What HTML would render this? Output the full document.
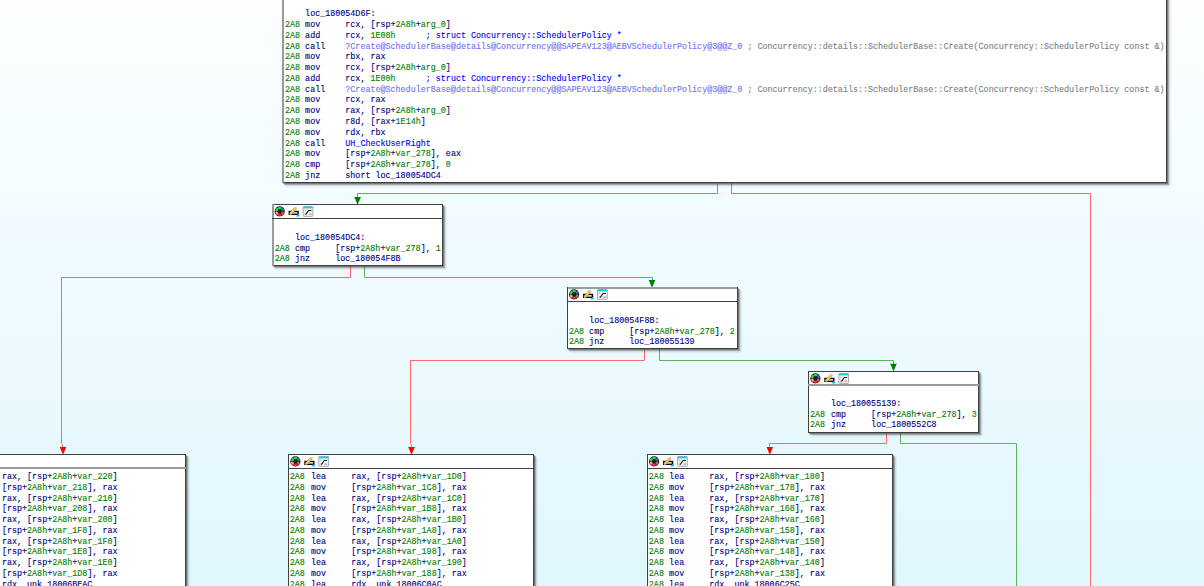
<!DOCTYPE html>
<html><head><meta charset="utf-8"><style>
html,body{margin:0;padding:0}
body{width:1204px;height:586px;overflow:hidden;position:relative;background:linear-gradient(to bottom,#fcfeff 0px,#e0f7fe 586px)}
.bd{position:absolute}
.node{position:absolute;background:#fff;box-shadow:1px 1px 0 rgba(0,0,0,.28),2px 2px 1px rgba(0,0,0,.22),3px 3px 2px rgba(0,0,0,.14)}
.sep{position:absolute;height:1px;background:#3c3c3c}
.icons{position:absolute}
.ln{position:absolute;white-space:pre;font-family:"Liberation Mono",monospace;font-size:8.39px;line-height:10.78px;color:#000080;-webkit-text-stroke:0.12px currentColor}
.g{color:#008000}.b{color:#0000ff}.i{color:#7272f4}.c{color:#808080}
svg.edges{position:absolute;left:0;top:0}
</style></head><body>
<svg class="edges" width="1204" height="586"><path d="M717.5 183.5 L717.5 193.5 L357.5 193.5 L357.5 200.5" stroke="#5eb262" stroke-width="1" fill="none" stroke-linejoin="round"/><path d="M354.30 197.00 L360.90 197.00 L357.60 204.80 Z" fill="#008000"/><path d="M731.5 183.5 L731.5 193.5 L1090.5 193.5 L1090.5 600.5" stroke="#ff6868" stroke-width="1" fill="none" stroke-linejoin="round"/><path d="M350.5 266.5 L350.5 277.5 L61.5 277.5 L61.5 443.5 L62.5 444.5 L62.5 448.5" stroke="#ff6868" stroke-width="1" fill="none" stroke-linejoin="round"/><path d="M59.70 447.00 L66.30 447.00 L63.00 454.80 Z" fill="#ff0000"/><path d="M364.5 266.5 L364.5 277.5 L652.5 277.5 L652.5 283.5" stroke="#5eb262" stroke-width="1" fill="none" stroke-linejoin="round"/><path d="M648.70 280.00 L655.30 280.00 L652.00 287.80 Z" fill="#008000"/><path d="M644.5 349.5 L644.5 360.5 L410.5 360.5 L410.5 443.5 L411.5 444.5 L411.5 448.5" stroke="#ff6868" stroke-width="1" fill="none" stroke-linejoin="round"/><path d="M408.20 447.00 L414.80 447.00 L411.50 454.80 Z" fill="#ff0000"/><path d="M659.5 349.5 L659.5 360.5 L893.5 360.5 L893.5 366.5" stroke="#5eb262" stroke-width="1" fill="none" stroke-linejoin="round"/><path d="M890.20 363.80 L896.80 363.80 L893.50 371.60 Z" fill="#008000"/><path d="M886.5 433.5 L886.5 443.5 L769.5 443.5 L769.5 449.5" stroke="#ff6868" stroke-width="1" fill="none" stroke-linejoin="round"/><path d="M766.50 447.00 L773.10 447.00 L769.80 454.80 Z" fill="#ff0000"/><path d="M900.5 433.5 L900.5 443.5 L1016.5 443.5 L1016.5 600.5" stroke="#5eb262" stroke-width="1" fill="none" stroke-linejoin="round"/></svg>
<div class="node" style="left:282px;top:-40px;width:885px;height:223px"></div>
<div class="bd" style="left:282px;top:-40px;width:885px;height:1px;background:#404040"></div>
<div class="bd" style="left:282px;top:182px;width:885px;height:1px;background:#404040"></div>
<div class="bd" style="left:282px;top:-40px;width:2px;height:223px;background:#9a9a9a"></div>
<div class="bd" style="left:1166px;top:-40px;width:1px;height:223px;background:#404040"></div>
<div class="bd" style="left:282px;top:-6px;width:885px;height:1px;background:#404040"></div>
<div class="ln" style="left:285.00px;top:9.22px">    loc_180054D6F:</div>
<div class="ln g" style="left:284.90px;top:20.00px">2A8</div>
<div class="ln" style="left:285.00px;top:20.00px">    mov     rcx, [rsp+<span class="g">2A8h</span>+<span class="g">arg_0</span>]</div>
<div class="ln g" style="left:284.90px;top:30.78px">2A8</div>
<div class="ln" style="left:285.00px;top:30.78px">    add     rcx, <span class="g">1E08h</span>      <span class="b">; struct Concurrency::SchedulerPolicy *</span></div>
<div class="ln g" style="left:284.90px;top:41.56px">2A8</div>
<div class="ln" style="left:285.00px;top:41.56px">    call    <span class="i">?Create@SchedulerBase@details@Concurrency@@SAPEAV123@AEBVSchedulerPolicy@3@@Z_0</span> <span class="c">; Concurrency::details::SchedulerBase::Create(Concurrency::SchedulerPolicy const &amp;)</span></div>
<div class="ln g" style="left:284.90px;top:52.34px">2A8</div>
<div class="ln" style="left:285.00px;top:52.34px">    mov     rbx, rax</div>
<div class="ln g" style="left:284.90px;top:63.12px">2A8</div>
<div class="ln" style="left:285.00px;top:63.12px">    mov     rcx, [rsp+<span class="g">2A8h</span>+<span class="g">arg_0</span>]</div>
<div class="ln g" style="left:284.90px;top:73.90px">2A8</div>
<div class="ln" style="left:285.00px;top:73.90px">    add     rcx, <span class="g">1E00h</span>      <span class="b">; struct Concurrency::SchedulerPolicy *</span></div>
<div class="ln g" style="left:284.90px;top:84.68px">2A8</div>
<div class="ln" style="left:285.00px;top:84.68px">    call    <span class="i">?Create@SchedulerBase@details@Concurrency@@SAPEAV123@AEBVSchedulerPolicy@3@@Z_0</span> <span class="c">; Concurrency::details::SchedulerBase::Create(Concurrency::SchedulerPolicy const &amp;)</span></div>
<div class="ln g" style="left:284.90px;top:95.46px">2A8</div>
<div class="ln" style="left:285.00px;top:95.46px">    mov     rcx, rax</div>
<div class="ln g" style="left:284.90px;top:106.24px">2A8</div>
<div class="ln" style="left:285.00px;top:106.24px">    mov     rax, [rsp+<span class="g">2A8h</span>+<span class="g">arg_0</span>]</div>
<div class="ln g" style="left:284.90px;top:117.02px">2A8</div>
<div class="ln" style="left:285.00px;top:117.02px">    mov     r8d, [rax+<span class="g">1E14h</span>]</div>
<div class="ln g" style="left:284.90px;top:127.80px">2A8</div>
<div class="ln" style="left:285.00px;top:127.80px">    mov     rdx, rbx</div>
<div class="ln g" style="left:284.90px;top:138.58px">2A8</div>
<div class="ln" style="left:285.00px;top:138.58px">    call    <span class="b">UH_CheckUserRight</span></div>
<div class="ln g" style="left:284.90px;top:149.36px">2A8</div>
<div class="ln" style="left:285.00px;top:149.36px">    mov     [rsp+<span class="g">2A8h</span>+<span class="g">var_278</span>], eax</div>
<div class="ln g" style="left:284.90px;top:160.14px">2A8</div>
<div class="ln" style="left:285.00px;top:160.14px">    cmp     [rsp+<span class="g">2A8h</span>+<span class="g">var_278</span>], <span class="g">0</span></div>
<div class="ln g" style="left:284.90px;top:170.92px">2A8</div>
<div class="ln" style="left:285.00px;top:170.92px">    jnz     short loc_180054DC4</div>
<div class="node" style="left:272px;top:204px;width:171px;height:62px"></div>
<div class="bd" style="left:272px;top:204px;width:171px;height:1px;background:#404040"></div>
<div class="bd" style="left:272px;top:265px;width:171px;height:1px;background:#404040"></div>
<div class="bd" style="left:272px;top:204px;width:2px;height:62px;background:#9a9a9a"></div>
<div class="bd" style="left:442px;top:204px;width:1px;height:62px;background:#404040"></div>
<div class="bd" style="left:272px;top:218px;width:171px;height:1px;background:#404040"></div>
<svg class="icons" style="left:272px;top:204px" width="45" height="14" viewBox="0 0 45 14"><g transform="translate(0.60 0)">
<circle cx="7.1" cy="7.4" r="5.1" fill="#1e1e1e"/>
<g fill-opacity="1">
 <ellipse cx="7.1" cy="4.05" rx="1.9" ry="1.25" fill="#00e070"/>
 <ellipse cx="9.95" cy="5.7" rx="1.25" ry="1.7" transform="rotate(-30 9.95 5.7)" fill="#1878b8"/>
 <ellipse cx="9.95" cy="9.1" rx="1.25" ry="1.7" transform="rotate(30 9.95 9.1)" fill="#ff5510"/>
 <ellipse cx="7.1" cy="10.75" rx="1.9" ry="1.25" fill="#ff2058"/>
 <ellipse cx="4.25" cy="9.1" rx="1.25" ry="1.7" transform="rotate(-30 4.25 9.1)" fill="#ffa0a8"/>
 <ellipse cx="4.25" cy="5.7" rx="1.25" ry="1.7" transform="rotate(30 4.25 5.7)" fill="#44e020"/>
</g>
<rect x="16.7" y="7.5" width="8.8" height="2.8" fill="#fff" stroke="#0c0c0c" stroke-width="1.45"/>
<path d="M18.0 9.7 L22.5 4.7" stroke="#6a5a30" stroke-width="2.9" stroke-linecap="round" stroke-opacity="0.55"/><path d="M18.0 9.7 L22.5 4.7" stroke="#f2c85a" stroke-width="2.2" stroke-linecap="round"/>
<circle cx="23.3" cy="4.2" r="0.9" fill="#f4d8c8" stroke="#aaa" stroke-width="0.4"/>
<path d="M23.0 12.6 L26.6 9.0 L26.8 12.6 Z" fill="#1cb8ec"/>
<rect x="30.55" y="2.55" width="9.75" height="9.75" rx="0.6" fill="#f6f6f6" stroke="#a8a8a8" stroke-width="1"/>
<rect x="30.9" y="2.5" width="9.2" height="1.9" fill="#12ccf6"/>
<path d="M31 4.9 L40 4.9" stroke="#c8c8c8" stroke-width="0.5"/>
<circle cx="32.6" cy="6.2" r="0.55" fill="#9a9a9a"/><path d="M31.9 10.1 L33.6 10.1 M36.4 10.1 L39.0 10.1" stroke="#a0a0a0" stroke-width="1.2" fill="none"/>
<path d="M33.0 10.6 C34.3 9.8 34.9 7.2 36.2 6.5 L38.9 6.5" stroke="#1e1e1e" stroke-width="1.2" fill="none"/>
</g></svg>
<div class="ln" style="left:274.85px;top:232.78px">    loc_180054DC4:</div>
<div class="ln g" style="left:274.70px;top:243.56px">2A8</div>
<div class="ln" style="left:274.85px;top:243.56px">    cmp     [rsp+<span class="g">2A8h</span>+<span class="g">var_278</span>], <span class="g">1</span></div>
<div class="ln g" style="left:274.70px;top:254.34px">2A8</div>
<div class="ln" style="left:274.85px;top:254.34px">    jnz     loc_180054F8B</div>
<div class="node" style="left:567px;top:287px;width:171px;height:62px"></div>
<div class="bd" style="left:567px;top:287px;width:171px;height:2px;background:#9a9a9a"></div>
<div class="bd" style="left:567px;top:348px;width:171px;height:1px;background:#404040"></div>
<div class="bd" style="left:567px;top:287px;width:1px;height:62px;background:#404040"></div>
<div class="bd" style="left:737px;top:287px;width:1px;height:62px;background:#404040"></div>
<div class="bd" style="left:567px;top:301px;width:171px;height:1px;background:#404040"></div>
<svg class="icons" style="left:567px;top:287px" width="45" height="14" viewBox="0 0 45 14"><g transform="translate(0.00 0)">
<circle cx="7.1" cy="7.4" r="5.1" fill="#1e1e1e"/>
<g fill-opacity="1">
 <ellipse cx="7.1" cy="4.05" rx="1.9" ry="1.25" fill="#00e070"/>
 <ellipse cx="9.95" cy="5.7" rx="1.25" ry="1.7" transform="rotate(-30 9.95 5.7)" fill="#1878b8"/>
 <ellipse cx="9.95" cy="9.1" rx="1.25" ry="1.7" transform="rotate(30 9.95 9.1)" fill="#ff5510"/>
 <ellipse cx="7.1" cy="10.75" rx="1.9" ry="1.25" fill="#ff2058"/>
 <ellipse cx="4.25" cy="9.1" rx="1.25" ry="1.7" transform="rotate(-30 4.25 9.1)" fill="#ffa0a8"/>
 <ellipse cx="4.25" cy="5.7" rx="1.25" ry="1.7" transform="rotate(30 4.25 5.7)" fill="#44e020"/>
</g>
<rect x="16.7" y="7.5" width="8.8" height="2.8" fill="#fff" stroke="#0c0c0c" stroke-width="1.45"/>
<path d="M18.0 9.7 L22.5 4.7" stroke="#6a5a30" stroke-width="2.9" stroke-linecap="round" stroke-opacity="0.55"/><path d="M18.0 9.7 L22.5 4.7" stroke="#f2c85a" stroke-width="2.2" stroke-linecap="round"/>
<circle cx="23.3" cy="4.2" r="0.9" fill="#f4d8c8" stroke="#aaa" stroke-width="0.4"/>
<path d="M23.0 12.6 L26.6 9.0 L26.8 12.6 Z" fill="#1cb8ec"/>
<rect x="30.55" y="2.55" width="9.75" height="9.75" rx="0.6" fill="#f6f6f6" stroke="#a8a8a8" stroke-width="1"/>
<rect x="30.9" y="2.5" width="9.2" height="1.9" fill="#12ccf6"/>
<path d="M31 4.9 L40 4.9" stroke="#c8c8c8" stroke-width="0.5"/>
<circle cx="32.6" cy="6.2" r="0.55" fill="#9a9a9a"/><path d="M31.9 10.1 L33.6 10.1 M36.4 10.1 L39.0 10.1" stroke="#a0a0a0" stroke-width="1.2" fill="none"/>
<path d="M33.0 10.6 C34.3 9.8 34.9 7.2 36.2 6.5 L38.9 6.5" stroke="#1e1e1e" stroke-width="1.2" fill="none"/>
</g></svg>
<div class="ln" style="left:569.00px;top:315.78px">    loc_180054F8B:</div>
<div class="ln g" style="left:569.00px;top:326.56px">2A8</div>
<div class="ln" style="left:569.00px;top:326.56px">    cmp     [rsp+<span class="g">2A8h</span>+<span class="g">var_278</span>], <span class="g">2</span></div>
<div class="ln g" style="left:569.00px;top:337.34px">2A8</div>
<div class="ln" style="left:569.00px;top:337.34px">    jnz     loc_180055139</div>
<div class="node" style="left:808px;top:371px;width:171px;height:62px"></div>
<div class="bd" style="left:808px;top:371px;width:171px;height:1px;background:#404040"></div>
<div class="bd" style="left:808px;top:432px;width:171px;height:1px;background:#404040"></div>
<div class="bd" style="left:808px;top:371px;width:1px;height:62px;background:#404040"></div>
<div class="bd" style="left:978px;top:371px;width:1px;height:62px;background:#404040"></div>
<div class="bd" style="left:808px;top:384px;width:171px;height:2px;background:#9a9a9a"></div>
<svg class="icons" style="left:808px;top:371px" width="45" height="14" viewBox="0 0 45 14"><g transform="translate(0.30 0)">
<circle cx="7.1" cy="7.4" r="5.1" fill="#1e1e1e"/>
<g fill-opacity="1">
 <ellipse cx="7.1" cy="4.05" rx="1.9" ry="1.25" fill="#00e070"/>
 <ellipse cx="9.95" cy="5.7" rx="1.25" ry="1.7" transform="rotate(-30 9.95 5.7)" fill="#1878b8"/>
 <ellipse cx="9.95" cy="9.1" rx="1.25" ry="1.7" transform="rotate(30 9.95 9.1)" fill="#ff5510"/>
 <ellipse cx="7.1" cy="10.75" rx="1.9" ry="1.25" fill="#ff2058"/>
 <ellipse cx="4.25" cy="9.1" rx="1.25" ry="1.7" transform="rotate(-30 4.25 9.1)" fill="#ffa0a8"/>
 <ellipse cx="4.25" cy="5.7" rx="1.25" ry="1.7" transform="rotate(30 4.25 5.7)" fill="#44e020"/>
</g>
<rect x="16.7" y="7.5" width="8.8" height="2.8" fill="#fff" stroke="#0c0c0c" stroke-width="1.45"/>
<path d="M18.0 9.7 L22.5 4.7" stroke="#6a5a30" stroke-width="2.9" stroke-linecap="round" stroke-opacity="0.55"/><path d="M18.0 9.7 L22.5 4.7" stroke="#f2c85a" stroke-width="2.2" stroke-linecap="round"/>
<circle cx="23.3" cy="4.2" r="0.9" fill="#f4d8c8" stroke="#aaa" stroke-width="0.4"/>
<path d="M23.0 12.6 L26.6 9.0 L26.8 12.6 Z" fill="#1cb8ec"/>
<rect x="30.55" y="2.55" width="9.75" height="9.75" rx="0.6" fill="#f6f6f6" stroke="#a8a8a8" stroke-width="1"/>
<rect x="30.9" y="2.5" width="9.2" height="1.9" fill="#12ccf6"/>
<path d="M31 4.9 L40 4.9" stroke="#c8c8c8" stroke-width="0.5"/>
<circle cx="32.6" cy="6.2" r="0.55" fill="#9a9a9a"/><path d="M31.9 10.1 L33.6 10.1 M36.4 10.1 L39.0 10.1" stroke="#a0a0a0" stroke-width="1.2" fill="none"/>
<path d="M33.0 10.6 C34.3 9.8 34.9 7.2 36.2 6.5 L38.9 6.5" stroke="#1e1e1e" stroke-width="1.2" fill="none"/>
</g></svg>
<div class="ln" style="left:810.80px;top:398.78px">    loc_180055139:</div>
<div class="ln g" style="left:809.90px;top:409.56px">2A8</div>
<div class="ln" style="left:810.80px;top:409.56px">    cmp     [rsp+<span class="g">2A8h</span>+<span class="g">var_278</span>], <span class="g">3</span></div>
<div class="ln g" style="left:809.90px;top:420.34px">2A8</div>
<div class="ln" style="left:810.80px;top:420.34px">    jnz     loc_1800552C8</div>
<div class="node" style="left:-60px;top:454px;width:246px;height:247px"></div>
<div class="bd" style="left:-60px;top:454px;width:246px;height:1px;background:#404040"></div>
<div class="bd" style="left:-60px;top:700px;width:246px;height:1px;background:#404040"></div>
<div class="bd" style="left:-60px;top:454px;width:1px;height:247px;background:#404040"></div>
<div class="bd" style="left:185px;top:454px;width:1px;height:247px;background:#404040"></div>
<div class="bd" style="left:-60px;top:467px;width:246px;height:2px;background:#9a9a9a"></div>
<svg class="icons" style="left:-60px;top:454px" width="45" height="14" viewBox="0 0 45 14"><g transform="translate(0.00 0)">
<circle cx="7.1" cy="7.4" r="5.1" fill="#1e1e1e"/>
<g fill-opacity="1">
 <ellipse cx="7.1" cy="4.05" rx="1.9" ry="1.25" fill="#00e070"/>
 <ellipse cx="9.95" cy="5.7" rx="1.25" ry="1.7" transform="rotate(-30 9.95 5.7)" fill="#1878b8"/>
 <ellipse cx="9.95" cy="9.1" rx="1.25" ry="1.7" transform="rotate(30 9.95 9.1)" fill="#ff5510"/>
 <ellipse cx="7.1" cy="10.75" rx="1.9" ry="1.25" fill="#ff2058"/>
 <ellipse cx="4.25" cy="9.1" rx="1.25" ry="1.7" transform="rotate(-30 4.25 9.1)" fill="#ffa0a8"/>
 <ellipse cx="4.25" cy="5.7" rx="1.25" ry="1.7" transform="rotate(30 4.25 5.7)" fill="#44e020"/>
</g>
<rect x="16.7" y="7.5" width="8.8" height="2.8" fill="#fff" stroke="#0c0c0c" stroke-width="1.45"/>
<path d="M18.0 9.7 L22.5 4.7" stroke="#6a5a30" stroke-width="2.9" stroke-linecap="round" stroke-opacity="0.55"/><path d="M18.0 9.7 L22.5 4.7" stroke="#f2c85a" stroke-width="2.2" stroke-linecap="round"/>
<circle cx="23.3" cy="4.2" r="0.9" fill="#f4d8c8" stroke="#aaa" stroke-width="0.4"/>
<path d="M23.0 12.6 L26.6 9.0 L26.8 12.6 Z" fill="#1cb8ec"/>
<rect x="30.55" y="2.55" width="9.75" height="9.75" rx="0.6" fill="#f6f6f6" stroke="#a8a8a8" stroke-width="1"/>
<rect x="30.9" y="2.5" width="9.2" height="1.9" fill="#12ccf6"/>
<path d="M31 4.9 L40 4.9" stroke="#c8c8c8" stroke-width="0.5"/>
<circle cx="32.6" cy="6.2" r="0.55" fill="#9a9a9a"/><path d="M31.9 10.1 L33.6 10.1 M36.4 10.1 L39.0 10.1" stroke="#a0a0a0" stroke-width="1.2" fill="none"/>
<path d="M33.0 10.6 C34.3 9.8 34.9 7.2 36.2 6.5 L38.9 6.5" stroke="#1e1e1e" stroke-width="1.2" fill="none"/>
</g></svg>
<div class="ln g" style="left:-58.40px;top:472.00px">2A8</div>
<div class="ln" style="left:-58.40px;top:472.00px">    lea     rax, [rsp+<span class="g">2A8h</span>+<span class="g">var_220</span>]</div>
<div class="ln g" style="left:-58.40px;top:482.78px">2A8</div>
<div class="ln" style="left:-58.40px;top:482.78px">    mov     [rsp+<span class="g">2A8h</span>+<span class="g">var_218</span>], rax</div>
<div class="ln g" style="left:-58.40px;top:493.56px">2A8</div>
<div class="ln" style="left:-58.40px;top:493.56px">    lea     rax, [rsp+<span class="g">2A8h</span>+<span class="g">var_210</span>]</div>
<div class="ln g" style="left:-58.40px;top:504.34px">2A8</div>
<div class="ln" style="left:-58.40px;top:504.34px">    mov     [rsp+<span class="g">2A8h</span>+<span class="g">var_208</span>], rax</div>
<div class="ln g" style="left:-58.40px;top:515.12px">2A8</div>
<div class="ln" style="left:-58.40px;top:515.12px">    lea     rax, [rsp+<span class="g">2A8h</span>+<span class="g">var_200</span>]</div>
<div class="ln g" style="left:-58.40px;top:525.90px">2A8</div>
<div class="ln" style="left:-58.40px;top:525.90px">    mov     [rsp+<span class="g">2A8h</span>+<span class="g">var_1F8</span>], rax</div>
<div class="ln g" style="left:-58.40px;top:536.68px">2A8</div>
<div class="ln" style="left:-58.40px;top:536.68px">    lea     rax, [rsp+<span class="g">2A8h</span>+<span class="g">var_1F0</span>]</div>
<div class="ln g" style="left:-58.40px;top:547.46px">2A8</div>
<div class="ln" style="left:-58.40px;top:547.46px">    mov     [rsp+<span class="g">2A8h</span>+<span class="g">var_1E8</span>], rax</div>
<div class="ln g" style="left:-58.40px;top:558.24px">2A8</div>
<div class="ln" style="left:-58.40px;top:558.24px">    lea     rax, [rsp+<span class="g">2A8h</span>+<span class="g">var_1E0</span>]</div>
<div class="ln g" style="left:-58.40px;top:569.02px">2A8</div>
<div class="ln" style="left:-58.40px;top:569.02px">    mov     [rsp+<span class="g">2A8h</span>+<span class="g">var_1D8</span>], rax</div>
<div class="ln g" style="left:-58.40px;top:579.80px">2A8</div>
<div class="ln" style="left:-58.40px;top:579.80px">    lea     rdx, unk_18006BEAC</div>
<div class="node" style="left:288px;top:454px;width:246px;height:247px"></div>
<div class="bd" style="left:288px;top:454px;width:246px;height:1px;background:#404040"></div>
<div class="bd" style="left:288px;top:700px;width:246px;height:1px;background:#404040"></div>
<div class="bd" style="left:288px;top:454px;width:1px;height:247px;background:#404040"></div>
<div class="bd" style="left:533px;top:454px;width:1px;height:247px;background:#404040"></div>
<div class="bd" style="left:288px;top:468px;width:246px;height:1px;background:#404040"></div>
<svg class="icons" style="left:288px;top:454px" width="45" height="14" viewBox="0 0 45 14"><g transform="translate(0.30 0)">
<circle cx="7.1" cy="7.4" r="5.1" fill="#1e1e1e"/>
<g fill-opacity="1">
 <ellipse cx="7.1" cy="4.05" rx="1.9" ry="1.25" fill="#00e070"/>
 <ellipse cx="9.95" cy="5.7" rx="1.25" ry="1.7" transform="rotate(-30 9.95 5.7)" fill="#1878b8"/>
 <ellipse cx="9.95" cy="9.1" rx="1.25" ry="1.7" transform="rotate(30 9.95 9.1)" fill="#ff5510"/>
 <ellipse cx="7.1" cy="10.75" rx="1.9" ry="1.25" fill="#ff2058"/>
 <ellipse cx="4.25" cy="9.1" rx="1.25" ry="1.7" transform="rotate(-30 4.25 9.1)" fill="#ffa0a8"/>
 <ellipse cx="4.25" cy="5.7" rx="1.25" ry="1.7" transform="rotate(30 4.25 5.7)" fill="#44e020"/>
</g>
<rect x="16.7" y="7.5" width="8.8" height="2.8" fill="#fff" stroke="#0c0c0c" stroke-width="1.45"/>
<path d="M18.0 9.7 L22.5 4.7" stroke="#6a5a30" stroke-width="2.9" stroke-linecap="round" stroke-opacity="0.55"/><path d="M18.0 9.7 L22.5 4.7" stroke="#f2c85a" stroke-width="2.2" stroke-linecap="round"/>
<circle cx="23.3" cy="4.2" r="0.9" fill="#f4d8c8" stroke="#aaa" stroke-width="0.4"/>
<path d="M23.0 12.6 L26.6 9.0 L26.8 12.6 Z" fill="#1cb8ec"/>
<rect x="30.55" y="2.55" width="9.75" height="9.75" rx="0.6" fill="#f6f6f6" stroke="#a8a8a8" stroke-width="1"/>
<rect x="30.9" y="2.5" width="9.2" height="1.9" fill="#12ccf6"/>
<path d="M31 4.9 L40 4.9" stroke="#c8c8c8" stroke-width="0.5"/>
<circle cx="32.6" cy="6.2" r="0.55" fill="#9a9a9a"/><path d="M31.9 10.1 L33.6 10.1 M36.4 10.1 L39.0 10.1" stroke="#a0a0a0" stroke-width="1.2" fill="none"/>
<path d="M33.0 10.6 C34.3 9.8 34.9 7.2 36.2 6.5 L38.9 6.5" stroke="#1e1e1e" stroke-width="1.2" fill="none"/>
</g></svg>
<div class="ln g" style="left:289.70px;top:472.00px">2A8</div>
<div class="ln" style="left:290.90px;top:472.00px">    lea     rax, [rsp+<span class="g">2A8h</span>+<span class="g">var_1D0</span>]</div>
<div class="ln g" style="left:289.70px;top:482.78px">2A8</div>
<div class="ln" style="left:290.90px;top:482.78px">    mov     [rsp+<span class="g">2A8h</span>+<span class="g">var_1C8</span>], rax</div>
<div class="ln g" style="left:289.70px;top:493.56px">2A8</div>
<div class="ln" style="left:290.90px;top:493.56px">    lea     rax, [rsp+<span class="g">2A8h</span>+<span class="g">var_1C0</span>]</div>
<div class="ln g" style="left:289.70px;top:504.34px">2A8</div>
<div class="ln" style="left:290.90px;top:504.34px">    mov     [rsp+<span class="g">2A8h</span>+<span class="g">var_1B8</span>], rax</div>
<div class="ln g" style="left:289.70px;top:515.12px">2A8</div>
<div class="ln" style="left:290.90px;top:515.12px">    lea     rax, [rsp+<span class="g">2A8h</span>+<span class="g">var_1B0</span>]</div>
<div class="ln g" style="left:289.70px;top:525.90px">2A8</div>
<div class="ln" style="left:290.90px;top:525.90px">    mov     [rsp+<span class="g">2A8h</span>+<span class="g">var_1A8</span>], rax</div>
<div class="ln g" style="left:289.70px;top:536.68px">2A8</div>
<div class="ln" style="left:290.90px;top:536.68px">    lea     rax, [rsp+<span class="g">2A8h</span>+<span class="g">var_1A0</span>]</div>
<div class="ln g" style="left:289.70px;top:547.46px">2A8</div>
<div class="ln" style="left:290.90px;top:547.46px">    mov     [rsp+<span class="g">2A8h</span>+<span class="g">var_198</span>], rax</div>
<div class="ln g" style="left:289.70px;top:558.24px">2A8</div>
<div class="ln" style="left:290.90px;top:558.24px">    lea     rax, [rsp+<span class="g">2A8h</span>+<span class="g">var_190</span>]</div>
<div class="ln g" style="left:289.70px;top:569.02px">2A8</div>
<div class="ln" style="left:290.90px;top:569.02px">    mov     [rsp+<span class="g">2A8h</span>+<span class="g">var_188</span>], rax</div>
<div class="ln g" style="left:289.70px;top:579.80px">2A8</div>
<div class="ln" style="left:290.90px;top:579.80px">    lea     rdx, unk_18006C0AC</div>
<div class="node" style="left:647px;top:454px;width:246px;height:247px"></div>
<div class="bd" style="left:647px;top:454px;width:246px;height:1px;background:#404040"></div>
<div class="bd" style="left:647px;top:700px;width:246px;height:1px;background:#404040"></div>
<div class="bd" style="left:647px;top:454px;width:1px;height:247px;background:#404040"></div>
<div class="bd" style="left:892px;top:454px;width:1px;height:247px;background:#404040"></div>
<div class="bd" style="left:647px;top:468px;width:246px;height:1px;background:#404040"></div>
<svg class="icons" style="left:647px;top:454px" width="45" height="14" viewBox="0 0 45 14"><g transform="translate(0.00 0)">
<circle cx="7.1" cy="7.4" r="5.1" fill="#1e1e1e"/>
<g fill-opacity="1">
 <ellipse cx="7.1" cy="4.05" rx="1.9" ry="1.25" fill="#00e070"/>
 <ellipse cx="9.95" cy="5.7" rx="1.25" ry="1.7" transform="rotate(-30 9.95 5.7)" fill="#1878b8"/>
 <ellipse cx="9.95" cy="9.1" rx="1.25" ry="1.7" transform="rotate(30 9.95 9.1)" fill="#ff5510"/>
 <ellipse cx="7.1" cy="10.75" rx="1.9" ry="1.25" fill="#ff2058"/>
 <ellipse cx="4.25" cy="9.1" rx="1.25" ry="1.7" transform="rotate(-30 4.25 9.1)" fill="#ffa0a8"/>
 <ellipse cx="4.25" cy="5.7" rx="1.25" ry="1.7" transform="rotate(30 4.25 5.7)" fill="#44e020"/>
</g>
<rect x="16.7" y="7.5" width="8.8" height="2.8" fill="#fff" stroke="#0c0c0c" stroke-width="1.45"/>
<path d="M18.0 9.7 L22.5 4.7" stroke="#6a5a30" stroke-width="2.9" stroke-linecap="round" stroke-opacity="0.55"/><path d="M18.0 9.7 L22.5 4.7" stroke="#f2c85a" stroke-width="2.2" stroke-linecap="round"/>
<circle cx="23.3" cy="4.2" r="0.9" fill="#f4d8c8" stroke="#aaa" stroke-width="0.4"/>
<path d="M23.0 12.6 L26.6 9.0 L26.8 12.6 Z" fill="#1cb8ec"/>
<rect x="30.55" y="2.55" width="9.75" height="9.75" rx="0.6" fill="#f6f6f6" stroke="#a8a8a8" stroke-width="1"/>
<rect x="30.9" y="2.5" width="9.2" height="1.9" fill="#12ccf6"/>
<path d="M31 4.9 L40 4.9" stroke="#c8c8c8" stroke-width="0.5"/>
<circle cx="32.6" cy="6.2" r="0.55" fill="#9a9a9a"/><path d="M31.9 10.1 L33.6 10.1 M36.4 10.1 L39.0 10.1" stroke="#a0a0a0" stroke-width="1.2" fill="none"/>
<path d="M33.0 10.6 C34.3 9.8 34.9 7.2 36.2 6.5 L38.9 6.5" stroke="#1e1e1e" stroke-width="1.2" fill="none"/>
</g></svg>
<div class="ln g" style="left:648.85px;top:472.00px">2A8</div>
<div class="ln" style="left:649.00px;top:472.00px">    lea     rax, [rsp+<span class="g">2A8h</span>+<span class="g">var_180</span>]</div>
<div class="ln g" style="left:648.85px;top:482.78px">2A8</div>
<div class="ln" style="left:649.00px;top:482.78px">    mov     [rsp+<span class="g">2A8h</span>+<span class="g">var_178</span>], rax</div>
<div class="ln g" style="left:648.85px;top:493.56px">2A8</div>
<div class="ln" style="left:649.00px;top:493.56px">    lea     rax, [rsp+<span class="g">2A8h</span>+<span class="g">var_170</span>]</div>
<div class="ln g" style="left:648.85px;top:504.34px">2A8</div>
<div class="ln" style="left:649.00px;top:504.34px">    mov     [rsp+<span class="g">2A8h</span>+<span class="g">var_168</span>], rax</div>
<div class="ln g" style="left:648.85px;top:515.12px">2A8</div>
<div class="ln" style="left:649.00px;top:515.12px">    lea     rax, [rsp+<span class="g">2A8h</span>+<span class="g">var_160</span>]</div>
<div class="ln g" style="left:648.85px;top:525.90px">2A8</div>
<div class="ln" style="left:649.00px;top:525.90px">    mov     [rsp+<span class="g">2A8h</span>+<span class="g">var_158</span>], rax</div>
<div class="ln g" style="left:648.85px;top:536.68px">2A8</div>
<div class="ln" style="left:649.00px;top:536.68px">    lea     rax, [rsp+<span class="g">2A8h</span>+<span class="g">var_150</span>]</div>
<div class="ln g" style="left:648.85px;top:547.46px">2A8</div>
<div class="ln" style="left:649.00px;top:547.46px">    mov     [rsp+<span class="g">2A8h</span>+<span class="g">var_148</span>], rax</div>
<div class="ln g" style="left:648.85px;top:558.24px">2A8</div>
<div class="ln" style="left:649.00px;top:558.24px">    lea     rax, [rsp+<span class="g">2A8h</span>+<span class="g">var_140</span>]</div>
<div class="ln g" style="left:648.85px;top:569.02px">2A8</div>
<div class="ln" style="left:649.00px;top:569.02px">    mov     [rsp+<span class="g">2A8h</span>+<span class="g">var_138</span>], rax</div>
<div class="ln g" style="left:648.85px;top:579.80px">2A8</div>
<div class="ln" style="left:649.00px;top:579.80px">    lea     rdx, unk_18006C25C</div>
</body></html>
